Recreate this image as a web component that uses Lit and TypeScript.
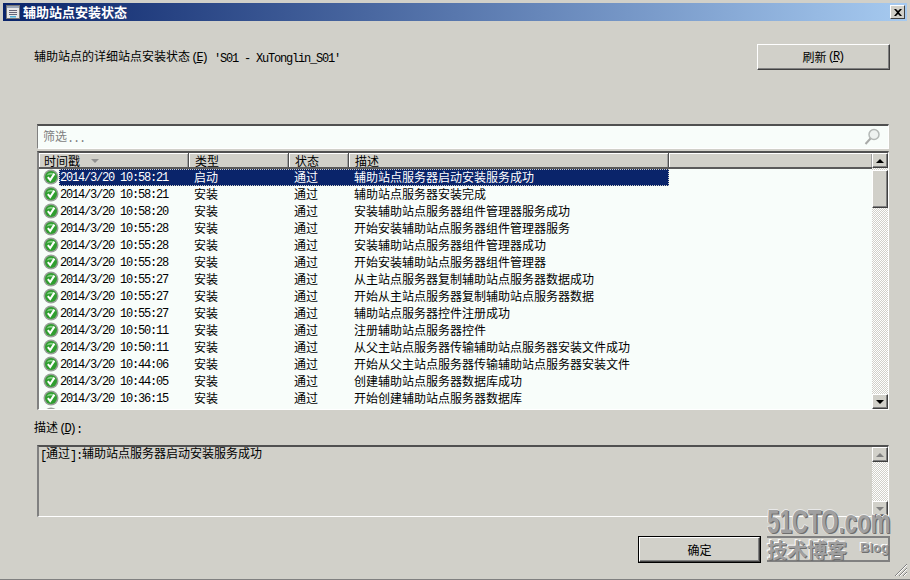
import { LitElement, html, css, svg } from "lit";
import { customElement } from "lit/decorators.js";

const T = (s: string) =>
  s.split(/(\(&.\)|[\x00-\x7f]+)/).filter(Boolean).map((p) => {
    if (p.startsWith("(&")) return html`<span class="mn">(<u>${p[2]}</u>)</span>`;
    if (!/^[\x00-\x7f]/.test(p)) return html`<span class="c">${p}</span>`;
    return html`<span class="l">${p}</span>`;
  });

const ROWS: [string, string, string][] = [
  ["2014/3/20 10:58:21", "启动", "辅助站点服务器启动安装服务成功"],
  ["2014/3/20 10:58:21", "安装", "辅助站点服务器安装完成"],
  ["2014/3/20 10:58:20", "安装", "安装辅助站点服务器组件管理器服务成功"],
  ["2014/3/20 10:55:28", "安装", "开始安装辅助站点服务器组件管理器服务"],
  ["2014/3/20 10:55:28", "安装", "安装辅助站点服务器组件管理器成功"],
  ["2014/3/20 10:55:28", "安装", "开始安装辅助站点服务器组件管理器"],
  ["2014/3/20 10:55:27", "安装", "从主站点服务器复制辅助站点服务器数据成功"],
  ["2014/3/20 10:55:27", "安装", "开始从主站点服务器复制辅助站点服务器数据"],
  ["2014/3/20 10:55:27", "安装", "辅助站点服务器控件注册成功"],
  ["2014/3/20 10:50:11", "安装", "注册辅助站点服务器控件"],
  ["2014/3/20 10:50:11", "安装", "从父主站点服务器传输辅助站点服务器安装文件成功"],
  ["2014/3/20 10:44:06", "安装", "开始从父主站点服务器传输辅助站点服务器安装文件"],
  ["2014/3/20 10:44:05", "安装", "创建辅助站点服务器数据库成功"],
  ["2014/3/20 10:36:15", "安装", "开始创建辅助站点服务器数据库"],
  ["", "", ""],
];

const okIcon = svg`<svg width="16" height="16" viewBox="0 0 16 16">
  <circle cx="8" cy="8" r="7.5" fill="#98a098"/>
  <circle cx="8" cy="8" r="6" fill="#2f9e2f"/>
  <path d="M3.5 6.5A5 5 0 0 1 12.5 6.5Q8 4.5 3.5 6.5Z" fill="#8fd88f"/>
  <path d="M4.8 8.2L7.2 11L11.4 4.6" fill="none" stroke="#fff" stroke-width="2"/>
</svg>`;

@customElement("app-root")
export class AppRoot extends LitElement {
  static styles = css`
    :host { display: block; width: 910px; height: 580px; overflow: hidden; }
    * { box-sizing: border-box; }
    .window {
      position: relative; width: 910px; height: 580px; background: #d1d0c9;
      color: #000; font-size: 12px; line-height: 16px;
      padding-top: 3px; border-bottom: 1px solid #808080;
      display: flex; flex-direction: column;
    }
    .c { font-family: "Noto Sans CJK SC", sans-serif; }
    .l { font-family: "Liberation Mono", monospace; letter-spacing: -1.2px; white-space: pre; vertical-align: -1px; }
    .mn { display: inline-block; width: 18px; text-align: center; font-family: "Liberation Mono", monospace; letter-spacing: -2px; font-size: 12px; }
    .title {
      height: 18px; margin: 0 3px; flex: none; display: flex; align-items: center; padding: 0 2px 0 3px;
      background: linear-gradient(90deg, #0a246a, #a6caf0); color: #fff; font-weight: 700; gap: 3px; font-size: 13px;
    }
    .title .t { flex: 1; }
    .close {
      width: 15px; height: 14px; background: #d1d0c9; display: flex; align-items: center; justify-content: center;
      border: 1px solid; border-color: #fff #404040 #404040 #fff;
    }
    .body { flex: 1; display: flex; flex-direction: column; padding: 23px 21px 0 37px; }
    .head { height: 26px; display: flex; justify-content: space-between; align-items: center; margin: 0 -1px 0 -3px; }
    .btn {
      display: flex; align-items: center; justify-content: center; background: #d1d0c9;
      border: 1px solid; border-color: #fff #404040 #404040 #fff; box-shadow: inset -1px -1px 0 #808080;
    }
    .refresh { width: 133px; height: 26px; }
    .filter {
      margin-top: 54px; height: 25px; background: #f8fdfa; display: flex; align-items: center; justify-content: space-between;
      padding: 0 8px 0 5px; color: #808080;
      border: 1px solid; border-color: #505050 #fff #fff #808080; border-top-width: 2px;
    }
    .list {
      margin-top: 2px; height: 259px; display: flex; background: #f8fdfa; overflow: hidden;
      border: 1px solid; border-color: #808080 #fff #fff #808080; border-top: 2px solid #505050; border-left-width: 2px;
    }
    .main { flex: 1; min-width: 0; display: flex; flex-direction: column; }
    .hdr { display: flex; height: 16px; flex: none; background: #d1d0c9; border-bottom: 2px solid #5a5a5a; }
    .hc {
      padding: 1px 0 0 5px; line-height: 14px; display: flex; align-items: center; gap: 11px;
      border-right: 1px solid #505050; box-shadow: inset 1px 1px 0 #fff, inset -1px 0 0 #a0a0a0;
    }
    .hc:nth-child(1) { width: 150px; }
    .hc:nth-child(2) { width: 100px; padding-left: 6px; }
    .hc:nth-child(3) { width: 60px; padding-left: 6px; }
    .hc:nth-child(4) { width: 320px; padding-left: 6px; }
    .hc:nth-child(5) { flex: 1; border-right: none; }
    .arrow { width: 0; height: 0; border: 4px solid transparent; border-top: 4px solid #909090; border-bottom: 0; }
    .row { display: flex; height: 17px; flex: none; line-height: 15px; }
    .ic { width: 20px; flex: none; padding: 0 0 0 4px; }
    .ic svg { display: block; }
    .cells { display: grid; grid-template-columns: 130px 100px 60px 320px; height: 17px; }
    .cells > div { padding-left: 5px; }
    .cells > div:first-child { padding-left: 1px; }
    .sel .cells { background: #0a246a; color: #fff; outline: 1px dotted #d1d0c9; outline-offset: -1px; }
    .sb { width: 16px; flex: none; display: flex; flex-direction: column; background: repeating-conic-gradient(#fff 0 25%, #d1d0c9 0 50%) 0 0 / 2px 2px; }
    .sbb {
      height: 15px; flex: none; background: #d1d0c9; display: flex; align-items: center; justify-content: center;
      border: 1px solid; border-color: #fff #404040 #404040 #fff; box-shadow: inset -1px -1px 0 #808080;
    }
    .thumb {
      height: 38px; flex: none; background: #d1d0c9; margin-top: 2px;
      border: 1px solid; border-color: #fff #404040 #404040 #fff; box-shadow: inset -1px -1px 0 #808080;
    }
    .grow { flex: 1; }
    .up { width: 0; height: 0; border: 4px solid transparent; border-bottom: 4px solid #000; border-top: 0; }
    .dn { width: 0; height: 0; border: 4px solid transparent; border-top: 4px solid #000; border-bottom: 0; }
    .dim .up { border-bottom-color: #808080; }
    .dim .dn { border-top-color: #808080; }
    .label { margin: 9px 0 0 -3px; height: 16px; }
    .desc {
      margin-top: 10px; height: 72px; display: flex; justify-content: space-between;
      border: 1px solid; border-color: #808080 #fff #fff #808080; border-top: 2px solid #505050; border-left-width: 2px;
    }
    .desc .tx { padding-left: 1px; line-height: 12px; }
    .foot { margin-top: 19px; display: flex; }
    .ok { width: 123px; height: 27px; margin-left: 601px; border: 1px solid #000; background: #d1d0c9; padding: 0; display: flex; }
    .ok > div { flex: 1; display: flex; align-items: center; justify-content: center;
      border: 1px solid; border-color: #fff #404040 #404040 #fff; box-shadow: inset -1px -1px 0 #808080; }
    .grip { position: absolute; right: 2px; bottom: 2px; }
    .wm { position: absolute; left: 767px; top: 504px; width: 123px; height: 58px; pointer-events: none; color: #a0a0a0; }
    .wm .big {
      position: absolute; left: 0; top: 2px; font: 700 34px/30px "Liberation Sans", sans-serif;
      transform: scaleX(0.655); transform-origin: 0 0; white-space: nowrap;
      text-shadow: 2px 1px 0 #6e6e6e, -1px 0 0 #f2f2f2, 0 -1px 0 #e8e8e8;
    }
    .wm .box { position: absolute; left: 0; right: 0; top: 32px; height: 26px; border: 2px solid #808080; border-left: none; }
    .wm .cn {
      position: absolute; left: 0; top: 35px; font: 700 20px/22px "Noto Sans CJK SC", sans-serif; white-space: nowrap;
      text-shadow: 1px 1px 0 #6e6e6e, -1px -1px 0 #fff;
    }
    .wm .blog {
      position: absolute; left: 93px; top: 37px; font: 700 13px/14px "Liberation Sans", sans-serif;
      text-shadow: 1px 1px 0 #707070, -1px -1px 0 #fff;
    }
  `;

  render() {
    return html`<div class="window">
      <div class="title">
        <svg width="14" height="14" viewBox="0 0 14 14">
          <rect x=".5" y=".5" width="13" height="13" fill="#e8e8e8" stroke="#777"/>
          <rect x="1" y="1" width="12" height="2" fill="#9aa6b8"/>
          <path d="M3 5.5h8M3 7.5h8M3 9.5h8" stroke="#667" stroke-width="1"/>
          <rect x="4" y="11" width="6" height="1.5" fill="#4bb0d8"/>
        </svg>
        <div class="t">${T("辅助站点安装状态")}</div>
        <div class="close">
          <svg width="8" height="7" viewBox="0 0 8 7"><path d="M0 0h2l2 2 2-2h2L5 3.5 8 7H6L4 5 2 7H0l3-3.5Z" fill="#000"/></svg>
        </div>
      </div>
      <div class="body">
        <div class="head">
          <div>${T("辅助站点的详细站点安装状态(&E) 'S01 - XuTonglin_S01'")}</div>
          <div class="btn refresh">${T("刷新(&R)")}</div>
        </div>
        <div class="filter">
          <div>${T("筛选...")}</div>
          <svg width="16" height="18" viewBox="0 0 16 18">
            <circle cx="10" cy="6.5" r="5" fill="#eef2f0" stroke="#b4b8b6" stroke-width="1.5"/>
            <path d="M6.5 10.5L1.5 16" stroke="#a8aaa8" stroke-width="2"/>
          </svg>
        </div>
        <div class="list">
          <div class="main">
            <div class="hdr">
              <div class="hc">${T("时间戳")}<span class="arrow"></span></div>
              <div class="hc">${T("类型")}</div>
              <div class="hc">${T("状态")}</div>
              <div class="hc">${T("描述")}</div>
              <div class="hc"></div>
            </div>
            ${ROWS.map(
              (r, i) => html`<div class="row ${i === 0 ? "sel" : ""}">
                <div class="ic">${okIcon}</div>
                <div class="cells">
                  <div>${T(r[0])}</div>
                  <div>${T(r[1])}</div>
                  <div>${r[0] ? T("通过") : ""}</div>
                  <div>${T(r[2])}</div>
                </div>
              </div>`
            )}
          </div>
          <div class="sb">
            <div class="sbb"><span class="up"></span></div>
            <div class="thumb"></div>
            <div class="grow"></div>
            <div class="sbb"><span class="dn"></span></div>
          </div>
        </div>
        <div class="label">${T("描述(&D):")}</div>
        <div class="desc">
          <div class="tx">${T("[通过]:辅助站点服务器启动安装服务成功")}</div>
          <div class="sb dim">
            <div class="sbb"><span class="up"></span></div>
            <div class="grow"></div>
            <div class="sbb"><span class="dn"></span></div>
          </div>
        </div>
        <div class="foot">
          <div class="ok"><div>${T("确定")}</div></div>
        </div>
      </div>
      <svg class="grip" width="14" height="14" viewBox="0 0 14 14">
        <path d="M13 1L1 13M13 5L5 13M13 9L9 13" stroke="#808080" stroke-width="1"/>
        <path d="M13 2L2 13M13 6L6 13M13 10L10 13" stroke="#fff" stroke-width="1"/>
      </svg>
      <div class="wm">
        <div class="big">51CTO.com</div>
        <div class="box"></div>
        <div class="cn">技术博客</div>
        <div class="blog">Blog</div>
      </div>
    </div>`;
  }
}
